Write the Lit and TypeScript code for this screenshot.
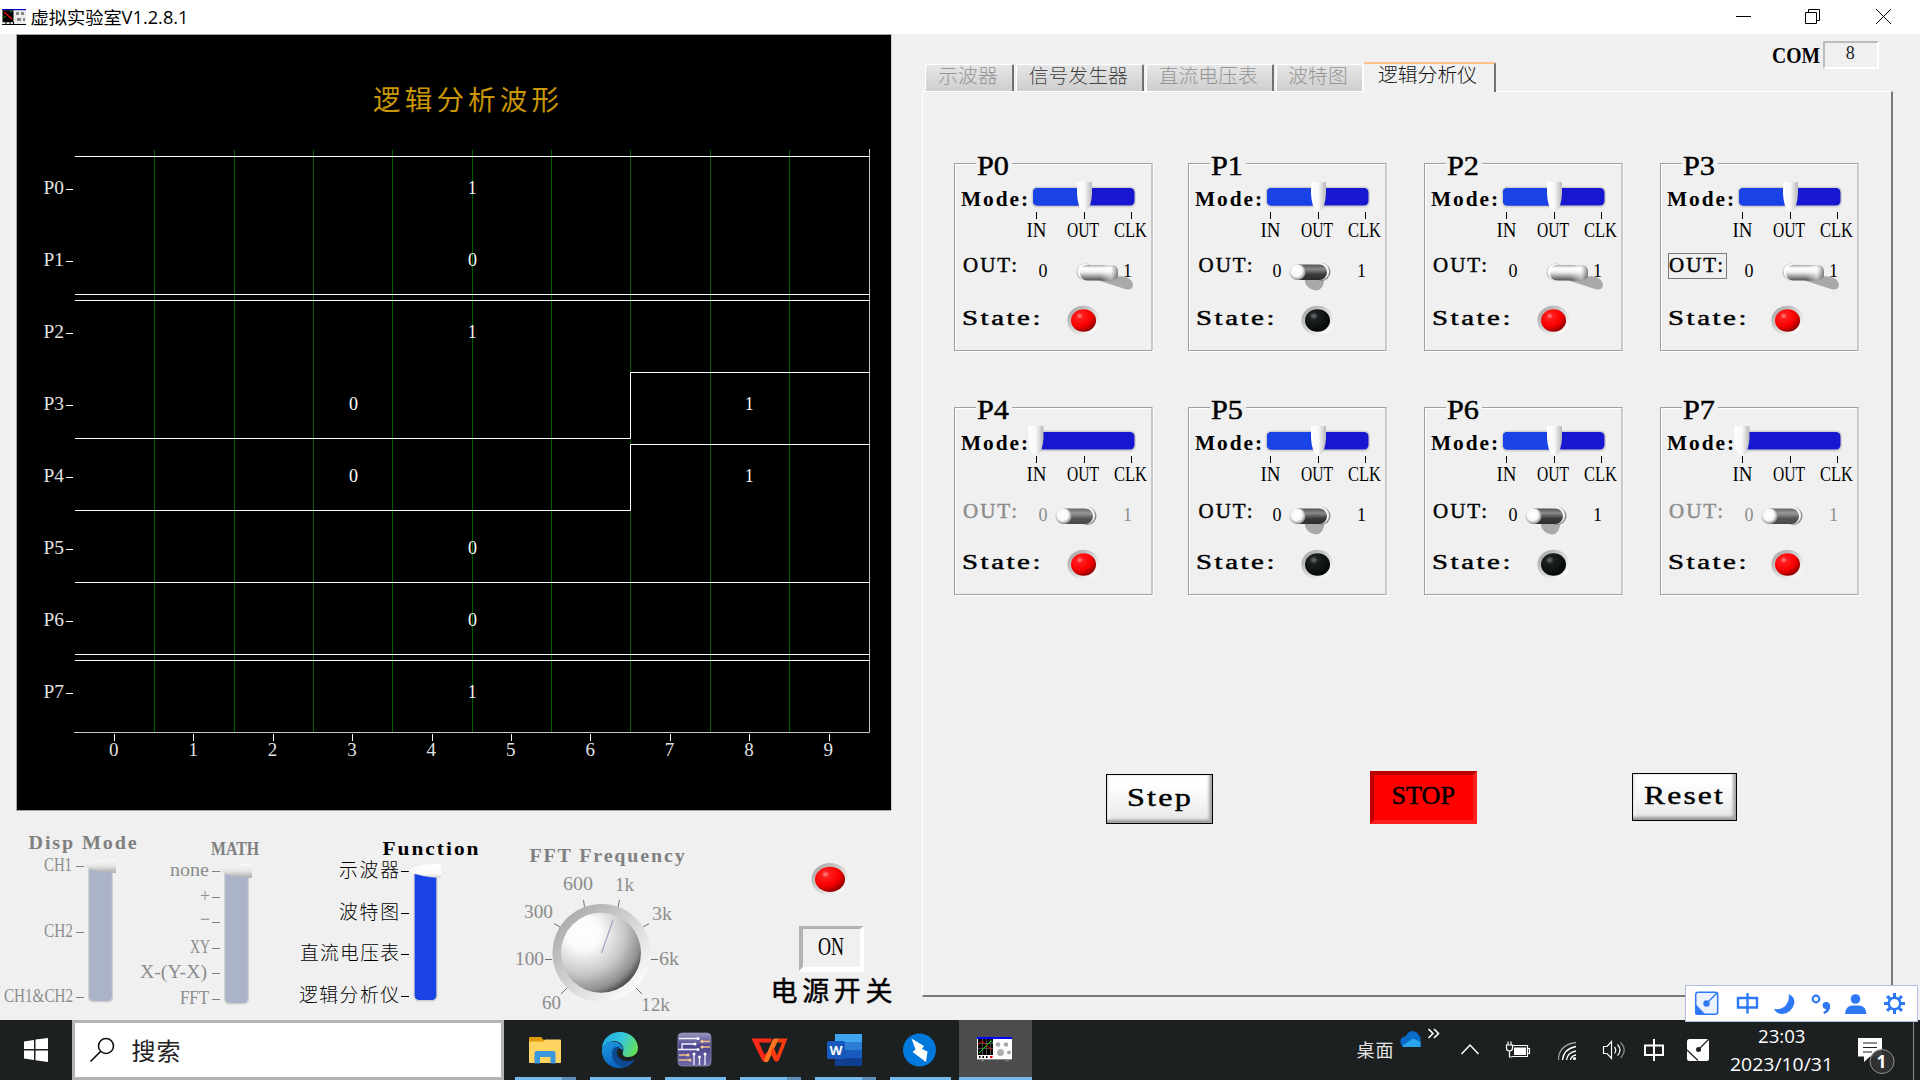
import { LitElement, html, svg, css } from "lit";
import { customElement, property } from "lit/decorators.js";

const label = (
  x: number, y: number, text: string, size: number, len: number,
  cls = "", adjust = "spacingAndGlyphs",
) => svg`<text class=${cls} x=${x} y=${y} font-size=${size} textLength=${len} lengthAdjust=${adjust}>${text}</text>`;

// Evenly spaced text whose glyphs keep their natural width.
const spaced = (x: number, y: number, text: string, size: number, len: number, cls = "") =>
  label(x, y, text, size, len, cls, "spacing");

// Wide text: glyphs and the gaps between them are stretched together.
const wide = (x: number, y: number, text: string, size: number, len: number, cls = "") =>
  label(x, y, text, size, len, "ls " + cls);

const defs = svg`<defs>
  <radialGradient id="red" cx=".35" cy=".3" r=".75">
    <stop offset="0" stop-color="#ff8a8a"/><stop offset=".18" stop-color="#ff1c1c"/>
    <stop offset=".6" stop-color="#fb0000"/><stop offset="1" stop-color="#8a0000"/>
  </radialGradient>
  <radialGradient id="black" cx=".35" cy=".3" r=".7">
    <stop offset="0" stop-color="#70787a"/><stop offset=".25" stop-color="#1b2020"/>
    <stop offset="1" stop-color="#050808"/>
  </radialGradient>
  <linearGradient id="ring" x1=".1" y1=".1" x2=".9" y2=".9">
    <stop offset="0" stop-color="#a8a8a8"/><stop offset=".6" stop-color="#dedede"/><stop offset="1" stop-color="#fff"/>
  </linearGradient>
  <linearGradient id="thumb" x1="0" y1="0" x2="1" y2="0">
    <stop offset="0" stop-color="#fff"/><stop offset=".5" stop-color="#f8f8f8"/><stop offset="1" stop-color="#b8b8b8"/>
  </linearGradient>
  <linearGradient id="thumbV" x1="0" y1="0" x2="0" y2="1">
    <stop offset="0" stop-color="#f8f8f8"/><stop offset=".5" stop-color="#e6e6e6"/><stop offset="1" stop-color="#ababab"/>
  </linearGradient>
  <linearGradient id="thumbW" x1="0" y1="0" x2="0" y2="1">
    <stop offset="0" stop-color="#fff"/><stop offset=".7" stop-color="#fafafa"/><stop offset="1" stop-color="#d0d0d0"/>
  </linearGradient>
  <linearGradient id="lever" x1="0" y1="0" x2="0" y2="1">
    <stop offset="0" stop-color="#a8a8a8"/><stop offset=".2" stop-color="#fff"/>
    <stop offset=".45" stop-color="#f2f2f2"/><stop offset="1" stop-color="#505050"/>
  </linearGradient>
  <linearGradient id="leverDark" x1="0" y1="0" x2="0" y2="1">
    <stop offset="0" stop-color="#555"/><stop offset=".3" stop-color="#8a8a8a"/><stop offset=".65" stop-color="#3a3a3a"/>
    <stop offset="1" stop-color="#2c2c2c"/>
  </linearGradient>
  <linearGradient id="leverDim" x1="0" y1="0" x2="0" y2="1">
    <stop offset="0" stop-color="#666"/><stop offset=".3" stop-color="#999"/><stop offset=".65" stop-color="#565656"/>
    <stop offset="1" stop-color="#484848"/>
  </linearGradient>
  <radialGradient id="ball" cx=".45" cy=".42" r=".58">
    <stop offset="0" stop-color="#fff"/><stop offset=".6" stop-color="#f8f8f8"/><stop offset="1" stop-color="#858585"/>
  </radialGradient>
  <linearGradient id="tip" x1="0" y1="0" x2="1" y2="0">
    <stop offset="0" stop-color="#fff" stop-opacity="0"/><stop offset=".6" stop-color="#fff" stop-opacity=".5"/>
    <stop offset="1" stop-color="#555" stop-opacity=".75"/>
  </linearGradient>
  <radialGradient id="knob" cx=".28" cy=".25" r=".85">
    <stop offset="0" stop-color="#fff"/><stop offset=".25" stop-color="#fafafa"/><stop offset=".6" stop-color="#c9c9c9"/>
    <stop offset=".85" stop-color="#909090"/><stop offset="1" stop-color="#3a3a3a"/>
  </radialGradient>
</defs>`;

const led = (x: number, y: number, rx: number, ry: number, on: boolean) => svg`
  <ellipse cx=${x} cy=${y} rx=${rx + 3.6} ry=${ry + 3.6} fill="url(#ring)"/>
  <ellipse cx=${x} cy=${y} rx=${rx} ry=${ry} fill=${on ? "url(#red)" : "url(#black)"}/>`;

const textCss = css`
  svg { display: block; overflow: visible; flex: none; }
  text { font-family: "Liberation Serif", "Noto Sans CJK SC", serif; fill: #000; white-space: pre; font-weight: 400; }
  .cn { font-weight: 300; }
  .b { font-weight: 700; }
  .ls { letter-spacing: 1.8px; }
  .m { stroke: #000; stroke-width: .45; }
  .g { fill: #8c8c8c; }
  .gb { fill: #808080; font-weight: 700; }
  .gm { fill: #8c8c8c; stroke: #8c8c8c; stroke-width: .45; }
  .w { fill: #fff; }
  .ax { fill: #e2e2e2; }
  .sans { font-family: "Open Sans", "Noto Sans CJK SC", sans-serif; }
`;

@customElement("channel-box")
class ChannelBox extends LitElement {
  @property() name = "";
  @property() mode: "IN" | "OUT" = "OUT";
  @property({ type: Boolean }) out = false;
  @property({ type: Boolean }) high = false;
  @property({ type: Boolean }) focused = false;
  @property({ type: Number }) outX = 9.5;
  @property({ type: Number }) outY = 109;
  @property({ type: Number }) ledX = 129.5;

  static styles = [textCss, css`:host { display: block; width: 200px; height: 190px; }`];

  private lever() {
    if (this.out) {
      return svg`
        <path d="M139 112 L170 113.5 Q179 116 179 122 Q178 128 171 126 L146 118Z" fill="#a9a9a9"/>
        <circle cx="131.5" cy="109.5" r="9" fill="url(#ring)"/>
        <circle cx="131" cy="108.5" r="7.5" fill="#fff"/>
        <rect x="126" y="102" width="38" height="15.5" rx="7" fill="url(#lever)"/>
        <rect x="146" y="102" width="18" height="15.5" rx="6" fill="url(#tip)"/>`;
    }
    const dim = this.mode === "IN";
    return svg`
      ${dim ? "" : svg`<path d="M117 114 H136 V119 Q134 127.500 128 127.500 Q119 126 117 119Z" fill="#a9a9a9"/>`}
      <circle cx="133.500" cy="109" r="9" fill="#8a8a8a"/>
      <circle cx="132.500" cy="108.300" r="8.600" fill="#f6f6f6"/>
      <rect x="104" y="101.500" width="35" height="15.500" rx="7.500" fill=${dim ? "url(#leverDim)" : "url(#leverDark)"}/>
      <circle cx="109.500" cy="109.200" r="8" fill="url(#ball)"/>`;
  }

  render() {
    const active = this.mode === "OUT";
    const tx = active ? 130.5 : 82;
    return html`<svg width="200" height="190" viewBox="0 0 200 190">
      ${defs}
      <rect x="1.5" y="1.5" width="197.500" height="187" fill="none" stroke="#fff"/>
      <rect x=".5" y=".5" width="197.500" height="187" fill="none" stroke="#a0a0a0"/>
      <rect x="22" y="-1" width="36" height="4" fill="#f0f0f0"/>
      ${label(23, 12, this.name, 27, 32, "m")}
      ${wide(7, 43, "Mode:", 20, 69, "b")}
      <rect x="77.500" y="23.500" width="104.500" height="21" rx="5.500" fill="#d2d2d2"/>
      <rect x="79" y="25" width="101.500" height="17.500" rx="4.500" fill="#1717d0"/>
      ${active ? svg`<path d="M130 25 H83.500 Q79 25 79 29.500 V38 Q79 42.500 83.500 42.500 H130Z" fill="#1943e4"/>` : ""}
      <path d="M${tx - 7.5} 19 H${tx + 7.5} V31 Q${tx + 6.5} 45 ${tx + 2} 48 H${tx - 2} Q${tx - 6.5} 45 ${tx - 7.5} 31Z" fill="url(#thumb)"/>
      <path d="M82.500 49 v7 M130.500 49 v7 M177.500 49 v7" stroke="#000"/>
      ${label(72.5, 74, "IN", 21, 20)}
      ${label(113, 74, "OUT", 21, 32)}
      ${label(160, 74, "CLK", 21, 33)}
      ${label(this.outX - 0.5, this.outY, "OUT:", 21, 54, active ? "m" : "gm", "spacing")}
      ${this.focused ? svg`<rect x="8.500" y="90.500" width="58" height="25" fill="none" stroke="#000" stroke-dasharray="1 1"/>` : ""}
      ${label(84.5, 113.5, "0", 18, 9, active ? "" : "g")}
      ${this.lever()}
      ${label(169, 113.5, "1", 18, 9, active ? "" : "g")}
      ${wide(8, 161.5, "State:", 20.5, 81, "m")}
      ${led(this.ledX, 157.5, 12.5, 11.2, this.high)}
    </svg>`;
  }
}

const channels = [
  { name: "P0", mode: "OUT", out: true, high: true, x: 9.5, y: 109, led: 129.5 },
  { name: "P1", mode: "OUT", out: false, high: false, x: 11, y: 109, led: 129.5 },
  { name: "P2", mode: "OUT", out: true, high: true, x: 9.5, y: 109, led: 129.5 },
  { name: "P3", mode: "OUT", out: true, high: true, x: 9.5, y: 109, led: 127.5, focused: true },
  { name: "P4", mode: "IN", out: false, high: true, x: 9.5, y: 111, led: 129.5 },
  { name: "P5", mode: "OUT", out: false, high: false, x: 11, y: 111, led: 129.5 },
  { name: "P6", mode: "OUT", out: false, high: false, x: 9.5, y: 111, led: 129.5 },
  { name: "P7", mode: "IN", out: false, high: true, x: 9.5, y: 111, led: 127.5 },
];

const tabs = [
  { text: "示波器", cls: "off", w: 89 },
  { text: "信号发生器", cls: "", w: 128.5 },
  { text: "直流电压表", cls: "off", w: 128.5 },
  { text: "波特图", cls: "off", w: 87 },
  { text: "逻辑分析仪", cls: "on", w: 133 },
];

@customElement("app-root")
class AppRoot extends LitElement {
  static styles = [textCss, css`
    :host { display: block; width: 1920px; height: 1080px; overflow: hidden; position: relative; background: #f0f0f0; }
    .window { display: flex; flex-direction: column; height: 1080px; }
    .titlebar { display: flex; height: 34px; background: #fff; justify-content: space-between; flex: none; }
    .main { display: flex; height: 986px; flex: none; }
    .left { width: 905px; flex: none; display: flex; flex-direction: column; }
    .chart { margin-left: 16px; }
    .controls { display: flex; height: 209px; }
    .right { margin-left: 17px; width: 971px; display: flex; flex-direction: column; }
    .head { display: flex; height: 57px; justify-content: space-between; flex: none; }
    .tabs { display: flex; align-items: flex-end; gap: 1.5px; padding-left: 3px; }
    .tab { box-sizing: border-box; height: 27px; border-left: 1px solid #fff; border-top: 1px solid #fff; border-right: 2px solid #707070;
      border-radius: 2px 2px 0 0; background: linear-gradient(#e6e6e6, #cecece); color: #444; padding-right: 2px;
      font: 300 19.8px/20px "Noto Sans CJK SC", sans-serif; text-align: center; white-space: nowrap; }
    .tab.off { color: #959595; }
    .tab:nth-child(4) { border-right-color: #fff; border-right-width: 1px; }
    .tab.on { height: 30px; margin: 0 0 -1px -1.5px; background: #f0f0f0; border-top: 2px solid #ffc08a; color: #111; line-height: 20px; z-index: 1; }
    .com { display: flex; padding: 7px 14px 0 0; gap: 3px; }
    .com-box { box-sizing: border-box; width: 56px; height: 28px; border: 2px solid; border-color: #bcbcbc #fff #fff #bcbcbc;
      text-align: center; font: 18px/20px "Liberation Serif", serif; color: #222; padding-right: 1.5px; }
    .panel { box-sizing: border-box; height: 906px; border: solid; border-width: 1px 2px 2px 1px; border-color: #fff #787878 #787878 #fff;
      padding: 71px 0 0 31px; }
    .grid { display: grid; grid-template-columns: 234px 236px 236px 200px; grid-template-rows: 244px 189px; }
    .buttons { display: flex; padding: 175px 0 0 152px; align-items: flex-start; }
    .btn { box-sizing: border-box; text-align: center; }
    .raised { border: 1.500px solid #000; background: linear-gradient(#fff 20%, #f2f2f2 65%, #e4e4e4);
      box-shadow: inset -4px 0 3px -1px #a6a6a6, inset 0 -4px 3px -1px #999, inset 3px 0 2px #f4f4f4; }
    .step { width: 107px; height: 50px; margin-top: 3px; }
    .stop { width: 107px; height: 53px; margin-left: 157px; background: #f00; border: 4px solid;
      border-color: #b80000 #ff2020 #ff2020 #c00000; }
    .reset { width: 105px; height: 48px; margin: 2px 0 0 155px; }
    .stop svg { margin: -4px; }
    .raised svg { margin: -1px; }
    .taskbar { display: flex; height: 60px; background: #1c2020; flex: none; }
    .search { box-sizing: border-box; width: 432px; height: 60px; border: 3px solid #b3b3b3; background: #fff; margin-right: 3px; }
    .tasks { display: flex; }
    .tray { margin-left: auto; display: flex; }
    .ime { position: absolute; left: 1685px; top: 984.5px; box-sizing: border-box; width: 233px; height: 37px; background: #fff;
      border: 1.500px solid #b3bfe2; }
  `];

  private chart() {
    const rows = [0, 1, 2, 3, 4, 5, 6, 7];
    const level = [1, 0, 1, -1, -1, 0, 0, 1];
    const hi = (i: number) => 156.5 + 72 * i;
    const lo = (i: number) => 222.5 + 72 * i;
    const at = (i: number) => 75 + 79.4 * i;
    return html`<svg class="chart" width="876" height="777" viewBox="16 34 876 777">
      <rect x="16" y="34" width="875.500" height="777" fill="#a8a8a8"/>
      <rect x="17" y="35" width="874" height="775" fill="#000"/>
      <text x="373" y="110" font-size="27.500" textLength="186" lengthAdjust="spacing" style="fill:#c99604">逻辑分析波形</text>
      ${[154, 234, 313, 392, 472, 551, 630, 710, 789].map((x) => svg`<path d="M${x + 0.5} 150V732" stroke="#006000"/>`)}
      <path d="M74 732.500H869.500V149" fill="none" stroke="#c8c8c8"/>
      ${rows.map((i) => svg`
        ${label(43.5, 194.3 + 72 * i, "P" + i, 19.5, 20.5, "ax")}
        <path d="M66 ${189.5 + 72 * i}h7" stroke="#fff"/>
        ${level[i] < 0
          ? svg`<path d="M75 ${lo(i)}H630.500V${hi(i)}H869" fill="none" stroke="#fff"/>
            ${label(349, 194 + 72 * i, "0", 19, 9, "w")}${label(745, 194 + 72 * i, "1", 19, 8.5, "w")}`
          : svg`<path d="M75 ${level[i] ? hi(i) : lo(i)}H869" stroke="#fff"/>
            ${label(468, 194 + 72 * i, String(level[i]), 19, level[i] ? 8.5 : 9, "w")}`}`)}
      ${[0, 1, 2, 3, 4, 5, 6, 7, 8, 9].map((i) => svg`
        <path d="M${Math.round(at(i) + 39) + 0.5} 734v7" stroke="#fff"/>
        ${label(at(i) + 34, 756, String(i), 19.5, 9.5, "ax")}`)}
    </svg>`;
  }

  private track(x: number, y: number, w: number, bottom: number, color: string) {
    return svg`<rect x=${x} y=${y} width=${w} height=${bottom - y + 1.5} rx="5" fill="#cfcfcf"/>
      <rect x=${x + 1.2} y=${y} width=${w - 2.4} height=${bottom - y} rx="4.500" fill=${color}/>`;
  }

  private pointer(x: number, y: number, fill: string) {
    return svg`<path d="M${x} ${y + 7} Q${x + 10} ${y + 0.5} ${x + 24} ${y} H${x + 33} V${y + 14} Q${x + 12} ${y + 13} ${x} ${y + 7}Z" fill=${fill}/>`;
  }

  private controls() {
    const ticks = (x: number, w: number, ys: number[], c: string) =>
      ys.map((y) => svg`<path d="M${x} ${y + 0.5}h${w}" stroke=${c}/>`);
    return html`<div class="controls">
      <svg width="139" height="209" viewBox="0 811 139 209">${defs}
        ${wide(28.5, 849, "Disp Mode", 19.5, 110, "gb")}
        ${label(44, 871, "CH1", 19, 28, "g")}${label(44, 937, "CH2", 19, 29, "g")}${label(4, 1002, "CH1&CH2", 19, 69, "g")}
        ${ticks(76, 8, [866, 932, 997], "#808080")}
        ${this.track(88, 866, 25, 1001, "#abb3c9")}
        ${this.pointer(83, 859, "url(#thumbV)")}
      </svg>
      <svg width="151" height="209" viewBox="139 811 151 209">
        ${label(211, 855, "MATH", 19.5, 48, "gb")}
        ${label(170, 876, "none", 19, 39, "g")}${label(200, 902, "+", 18, 10, "g")}${label(200, 925, "−", 18, 10, "g")}
        ${label(190, 953, "XY", 19, 20, "g")}${label(140, 978, "X-(Y-X)", 19, 67, "g")}${label(180, 1004, "FFT", 19, 29, "g")}
        ${ticks(212, 8, [871, 897, 922, 948, 973, 999], "#808080")}
        ${this.track(224, 870, 25, 1003, "#abb3c9")}
        ${this.pointer(219, 864, "url(#thumbV)")}
      </svg>
      <svg width="210" height="209" viewBox="290 811 210 209">
        ${wide(382.5, 855, "Function", 19.5, 98, "b")}
        ${spaced(339, 876.5, "示波器", 18.8, 60, "cn")}${spaced(339, 918.5, "波特图", 18.8, 60, "cn")}
        ${spaced(300, 959.5, "直流电压表", 18.8, 99, "cn")}${spaced(299, 1001.5, "逻辑分析仪", 18.8, 100, "cn")}
        ${ticks(401, 8, [871, 913, 954, 996], "#000")}
        ${this.track(413.5, 870, 24, 1000, "#1943e4")}
        ${this.pointer(408, 864, "url(#thumbW)")}
      </svg>
      <svg width="240" height="209" viewBox="500 811 240 209">
        ${wide(529.5, 862, "FFT Frequency", 19.5, 157, "gb")}
        ${label(563, 890, "600", 19, 30, "g")}${label(615, 891, "1k", 19, 19, "g")}${label(524, 918, "300", 19, 29, "g")}
        ${label(652, 920, "3k", 19, 20, "g")}${label(515, 965, "100", 19, 29, "g")}${label(659, 965, "6k", 19, 20, "g")}
        ${label(542, 1009, "60", 19, 19, "g")}${label(641, 1011, "12k", 19, 29, "g")}
        <path d="M583.500 900l1 7M619.500 900l-1.500 7M554 923.500l6 3.500M649 923.500l-6 3.500M545 959.500h7M651 959.500h7M561 994l6-6M642 994l-6-6" stroke="#707070"/>
        <circle cx="601.500" cy="953" r="49" fill="url(#ring)"/>
        <circle cx="601" cy="952.800" r="40" fill="url(#knob)"/>
        <path d="M601.500 953L613 920" stroke="#a3a3c9" stroke-width="1.200"/>
      </svg>
      <svg width="165" height="209" viewBox="740 811 165 209">
        ${led(830, 879.3, 15, 12.6, true)}
        <path d="M799 926h65l-4 3H803V967l-4 4.500Z" fill="#b2b2b2"/>
        <path d="M864 926v46h-66l5-5h57v-38Z" fill="#fff"/>
        ${label(818, 955, "ON", 26, 26)}
        <text class="m" x="770.500" y="1001" font-size="27" textLength="122" lengthAdjust="spacing" stroke-width=".8">电源开关</text>
      </svg>
    </div>`;
  }

  private task(content: unknown, w = 61, extra = 0) {
    return html`<svg width="75" height="60" viewBox="0 0 75 60">
      ${content}
      <path d="M8 58.500h${w}" stroke="#76b9ed" stroke-width="3"/>
      ${extra ? svg`<path d="M${8 + w} 58.500h${extra}" stroke="#5e8fb6" stroke-width="3"/>` : ""}
    </svg>`;
  }

  private taskbar() {
    return html`<div class="taskbar">
      <svg width="72" height="60" viewBox="0 1020 72 60">
        <path d="M24 1041.500L34 1040V1049H24ZM35.500 1039.500L48 1038V1049H35.500ZM24 1050.500H34V1060L24 1058.500ZM35.500 1050.500H48V1062L35.500 1060.200Z" fill="#fff"/>
      </svg>
      <div class="search"><svg width="426" height="54" viewBox="75 1023 426 54">
        <circle cx="106" cy="1046" r="7.500" fill="none" stroke="#111" stroke-width="1.600"/>
        <path d="M100.500 1051.500L90.500 1061.500" stroke="#111" stroke-width="1.700"/>
        <text class="sans" x="131.500" y="1060" font-size="24" textLength="49" style="fill:#222">搜索</text>
      </svg></div>
      <div class="tasks">
        ${this.task(svg`
          <path d="M22 18q0-1 1-1h11l3 3h17v3H22z" fill="#e09a08"/>
          <path d="M22 21.500h14l2-2h15q1 0 1 1V42q0 1-1 1H23q-1 0-1-1z" fill="#ffd460"/>
          <path d="M27.500 43.500V33q0-2 2-2H46.500q2 0 2 2V43.500H43.500V37H33V43.500z" fill="#3a97e0"/>`, 47, 14)}
        ${this.task(svg`
          <defs>
            <linearGradient id="e1" x1="0" y1=".3" x2="1" y2=".6"><stop offset="0" stop-color="#22a9e0"/><stop offset=".5" stop-color="#35c6dd"/><stop offset="1" stop-color="#66e055"/></linearGradient>
            <linearGradient id="e2" x1="0" y1="0" x2=".5" y2="1"><stop offset="0" stop-color="#1d9bde"/><stop offset="1" stop-color="#0a62c0"/></linearGradient>
          </defs>
          <path d="M20 29C20 18 29 12 38 12C49 12 56 20 56 28C56 34 51 37 46 37C42 37 40 35 41 32C43 27 39 22 33 21C27 21 22 24 20 29Z" fill="url(#e1)"/>
          <path d="M20 29C22 23 28 20 34 22C39 23 42 28 41 31C38 26 33 28 33 34C34 41 43 45 52 40C48 46 43 48 38 48C27 48 19 40 20 29Z" fill="url(#e2)"/>
          <path d="M30 33C29 41 36 47.500 43 47C48 45.500 51 42.500 53 39.500C46 43 37 41 35 34C34 30 36 28 38 27C33 26 30 29 30 33Z" fill="#0c4a94"/>`)}
        ${this.task(svg`
          <defs><linearGradient id="pcb" x1="0" y1="0" x2="0" y2="1"><stop offset="0" stop-color="#9a98bf"/><stop offset=".4" stop-color="#4b4590"/><stop offset="1" stop-color="#6c68a4"/></linearGradient></defs>
          <rect x="21" y="13" width="33" height="33" rx="4" fill="url(#pcb)" stroke="#8c8ab0" stroke-width=".8"/>
          <path d="M22 18.500H41M25 29V24H38M21 29.500H41M37 45V35M42.500 45V38M48 45V35" stroke="#f4f2ff" stroke-width="1.300" fill="none"/>
          <path d="M45 21.500H53M45 27H53M22 35H31M22 40H33" stroke="#f3bf82" stroke-width="1.400"/>
          ${[[41, 18.5], [38, 24], [41, 29.5], [37, 34], [42.5, 37], [48, 34]].map(([x, y]) => svg`<circle cx=${x} cy=${y} r="1.500" fill="#fff"/>`)}
          ${[[45, 21.5], [45, 27], [31, 35], [33, 40]].map(([x, y]) => svg`<circle cx=${x} cy=${y} r="1.500" fill="#f8c98e"/>`)}`)}
        ${this.task(svg`
          <path d="M19.500 18.500H40L38.500 22.500H27L32.500 35L34 32L37 37L34.500 41Q32.500 43.500 30 40Z" fill="#fb2a16"/>
          <path d="M33 38L40.500 20Q41 18.500 42.500 18.500H47L36.500 41Q34.500 43.500 32 41Z" fill="#ff7420"/>
          <path d="M41.500 27L45 35.500L50 22.500H45.500L47 18.500H55.500L47 40Q44.500 43.500 42 40L38.500 33Z" fill="#fc3a10"/>`, 47, 14)}
        ${this.task(svg`
          <rect x="28" y="14" width="27" height="8" fill="#41a5ee"/><rect x="28" y="22" width="27" height="8" fill="#2b7cd3"/>
          <rect x="28" y="30" width="27" height="8" fill="#185abd"/><rect x="28" y="38" width="27" height="8" fill="#103f91"/>
          <rect x="20" y="21" width="18" height="18" rx="1.500" fill="#1857bb"/>
          <text x="22.500" y="34.500" font-size="12.500" textLength="13" lengthAdjust="spacingAndGlyphs" class="sans b w">W</text>`, 47, 14)}
        ${this.task(svg`
          <circle cx="37.500" cy="30" r="16.500" fill="#0078dc"/>
          <path d="M29.500 18.500L42 26L40 29L45.500 31.500L44 42L30.500 32L33.500 29.500Z" fill="#fff"/>`)}
        <svg width="76" height="60" viewBox="957 1020 76 60">
          <rect x="959" y="1020" width="73" height="60" fill="#4a4c4e"/>
          ${this.labIcon()}
          <path d="M959 1078.500h73" stroke="#76b9ed" stroke-width="3"/>
        </svg>
      </div>
      <div class="tray">
        <svg width="72" height="60" viewBox="1350 1020 72 60">
          <text class="sans" x="1356.500" y="1056.500" font-size="18" textLength="37" style="fill:#e4e4e4">桌面</text>
          <path d="M1403 1047Q1399 1043 1401 1039Q1403 1036 1406 1036Q1408 1031 1413 1031Q1418 1032 1419 1036L1420.500 1036.500V1047Z" fill="#0a6cc8"/>
          <path d="M1402 1046L1413 1038.500L1420.500 1042V1047H1403.500Z" fill="#2aa4ec"/>
        </svg>
        <svg width="24" height="60" viewBox="1422 1020 24 60">
          <path d="M1428.500 1029l4.500 4.500l-4.500 4.500M1434 1029l4.500 4.500l-4.500 4.500" fill="none" stroke="#fff" stroke-width="1.600"/>
        </svg>
        <svg width="48" height="60" viewBox="1446 1020 48 60"><path d="M1461.500 1054l8.500-9l8.500 9" fill="none" stroke="#fff" stroke-width="1.500"/></svg>
        <svg width="50" height="60" viewBox="1494 1020 50 60">
          <path d="M1512 1045.500H1527.500V1056.500H1510V1053M1528 1048.500h1.500v5h-1.500" fill="none" stroke="#fff" stroke-width="1.200"/>
          <rect x="1514" y="1047.500" width="12" height="7.500" fill="#fff"/>
          <path d="M1506.500 1045h6v3q0 3-3 3t-3-3zM1508 1045v-3.500M1511 1045v-3.500M1509.500 1051v6h3" fill="#1c2020" stroke="#fff" stroke-width="1.200"/>
        </svg>
        <svg width="48" height="60" viewBox="1544 1020 48 60" fill="none" stroke-width="1.300">
          <path d="M1558.500 1060q0-15 17.500-17.500" stroke="#9a9a9a"/><path d="M1562.500 1060q1-11 13.500-13.500M1566.500 1060q1-7.500 9.500-9M1570.500 1060q.5-4 5.500-5" stroke="#fff"/>
          <circle cx="1574.500" cy="1058.500" r="1.600" fill="#fff"/>
        </svg>
        <svg width="42" height="60" viewBox="1592 1020 42 60" fill="none" stroke="#fff" stroke-width="1.200">
          <path d="M1603.500 1046.500h3.500l4.500-5v17l-4.500-5h-3.500z"/>
          <path d="M1614.500 1047q2.500 3 0 6.500M1617.500 1044.500q5 5.500 0 11"/><path d="M1620.500 1042.500q7.500 7.500 0 15.500" stroke="#888"/>
        </svg>
        <svg width="42" height="60" viewBox="1634 1020 42 60">
          <path d="M1645 1045.500h18v9.500h-18zM1654 1039v22" fill="none" stroke="#fff" stroke-width="2"/>
        </svg>
        <svg width="44" height="60" viewBox="1676 1020 44 60">
          <rect x="1687" y="1039" width="22" height="22" rx="2.500" fill="#fff"/>
          <circle cx="1698.500" cy="1049.500" r="2.500" fill="#1c2020"/><path d="M1698.500 1049.500L1708.500 1039.500M1687 1050L1698 1060.500" stroke="#1c2020" stroke-width="1.200"/>
        </svg>
        <svg width="126" height="60" viewBox="1720 1020 126 60">
          ${label(1758, 1042.7, "23:03", 18.5, 47.5, "sans w")}
          ${label(1730, 1070.7, "2023/10/31", 18.5, 103, "sans w")}
        </svg>
        <svg width="74" height="60" viewBox="1846 1020 74 60">
          <path d="M1858 1038h24v18.500h-12l-6 5.500v-5.500h-6z" fill="#fff"/>
          <path d="M1863 1043h14M1863 1047.500h14M1863 1052h9" stroke="#1c2020" stroke-width="1.200"/>
          <circle cx="1882" cy="1061.500" r="12" fill="#303232" fill-opacity=".93" stroke="#909090"/>
          ${label(1876.5, 1067.5, "1", 17.5, 10, "sans w b")}
          <path d="M1913.500 1021v59" stroke="#8a8c8c"/>
        </svg>
      </div>
    </div>`;
  }

  private labIcon() {
    return svg`
      <rect x="977" y="1037" width="35" height="22" fill="#fff"/><rect x="977" y="1037" width="35" height="2" fill="#00f"/>
      <rect x="978" y="1039" width="15" height="16" fill="#000"/>
      <path d="M982.500 1039v16M986.500 1039v16M990.500 1039v16M978 1043.500h15M978 1048.500h15" stroke="#777" stroke-width=".6"/>
      <path d="M978 1045l3-3.500l3 1l8 8" fill="none" stroke="#e00" /><path d="M979 1053l12-12l2 2" fill="none" stroke="#0c0"/>
      <circle cx="998" cy="1044.500" r="2.300" fill="#aaa"/><circle cx="1006" cy="1044.500" r="2.300" fill="#aaa"/>
      <circle cx="1000.500" cy="1052.500" r="3.500" fill="#b0b0b0"/><circle cx="1009" cy="1052.500" r="2" fill="#aaa"/>
      <path d="M979 1057h1.500M982.500 1057h1.500M986 1057h1.500" stroke="#000" stroke-width="2"/><path d="M990 1057h2.500" stroke="#e00" stroke-width="2"/>
      <path d="M977 1059.500h35M981 1060.800h3M1005 1060.800h4" stroke="#888"/>`;
  }

  private ime() {
    const c = "#2f78f5";
    return html`<div class="ime"><svg width="230" height="34" viewBox="1686 985.500 230 34">
      <rect x="1695.700" y="991.700" width="22" height="22" rx="2.500" fill="#eaf1ff" stroke=${c} stroke-width="1.500"/>
      <path d="M1695 1003v9q0 2.500 2.500 2.500h8.500z" fill=${c}/><circle cx="1706.500" cy="1003" r="3.200" fill=${c}/>
      <path d="M1706.500 1003L1717 992.500" stroke=${c} stroke-width="1.500"/>
      <path d="M1738 997.500h19v9.500h-19zM1747.500 992.500v20.500" fill="none" stroke=${c} stroke-width="2.400"/>
      <path d="M1788.500 993.500Q1796 997 1794 1004Q1791 1013 1782 1013.500Q1776 1013 1774 1008.500Q1782 1009.500 1786 1004.500Q1790 999.500 1788.500 993.500Z" fill=${c}/>
      <circle cx="1816" cy="998.500" r="3.300" fill="none" stroke=${c} stroke-width="2.200"/>
      <path d="M1826 1001.500a4 4 0 0 1 4.200 4q0 6-6 8l-1-1.800q3-1.300 3-3.200a3.500 3.500 0 0 1-.2-7z" fill=${c}/>
      <circle cx="1855.500" cy="998.500" r="4.800" fill=${c}/><path d="M1845 1013.500q.5-8 7-8.500h7.500q6.500 .5 7 8.500z" fill=${c}/>
      <circle cx="1894.500" cy="1003" r="5.800" fill="none" stroke=${c} stroke-width="2.600"/>
      ${[0, 45, 90, 135, 180, 225, 270, 315].map((a) => svg`<path d="M1894.500 996.500v-4" stroke=${c} stroke-width="3" transform="rotate(${a} 1894.500 1003)"/>`)}
    </svg></div>`;
  }

  render() {
    return html`
      <div class="window">
        <div class="titlebar">
          <svg width="220" height="34" viewBox="0 0 220 34">
            <rect x="2" y="9" width="24" height="16" fill="#eee"/><rect x="2" y="9" width="24" height="1.200" fill="#00c"/>
            <rect x="2.500" y="10.200" width="11" height="12" fill="#000"/>
            <path d="M4 12l8 7" stroke="#f00" stroke-width="1.200"/><path d="M3.500 18l2-2M10 12l2-1" stroke="#0d0"/>
            <path d="M16 13.500h3M21 13.500h3M17 19.500h4M23 19.500h2" stroke="#888" stroke-width="3"/>
            <path d="M2 24.500h24M6 22v2M10 22v2M13.500 22v2" stroke="#000"/>
            ${label(30.5, 23.5, "虚拟实验室V1.2.8.1", 17.5, 158, "sans")}
          </svg>
          <svg width="200" height="34" viewBox="1720 0 200 34" fill="none" stroke="#000">
            <path d="M1736 16.500h15M1876 9l15 15M1891 9l-15 15"/>
            <path d="M1805.500 12.500h11v11h-11zM1808.500 12.500v-3h11v11h-3"/>
          </svg>
        </div>
        <div class="main">
          <div class="left">${this.chart()}${this.controls()}</div>
          <div class="right">
            <div class="head">
              <div class="tabs">${tabs.map((t) => html`<div class="tab ${t.cls}" style="width:${t.w}px">${t.text}</div>`)}</div>
              <div class="com">
                <svg width="48" height="28" viewBox="1772 41 48 28">${label(1772, 62.5, "COM", 24, 48, "b")}</svg>
                <div class="com-box">8</div>
              </div>
            </div>
            <div class="panel">
              <div class="grid">${channels.map((c) => html`<channel-box .name=${c.name} .mode=${c.mode as "IN" | "OUT"}
                .out=${c.out} .high=${c.high} .focused=${!!c.focused} .outX=${c.x} .outY=${c.y} .ledX=${c.led}></channel-box>`)}</div>
              <div class="buttons">
                <div class="btn raised step"><svg width="107" height="50" viewBox="1106 774 107 50">${wide(1127, 805.5, "Step", 26, 66, "m")}</svg></div>
                <div class="btn stop"><svg width="107" height="53" viewBox="1370 771 107 53">${label(1391.5, 804, "STOP", 26, 63.5, "m")}</svg></div>
                <div class="btn raised reset"><svg width="105" height="48" viewBox="1632 773 105 48">${wide(1644, 804, "Reset", 26, 81, "m")}</svg></div>
              </div>
            </div>
          </div>
        </div>
        ${this.taskbar()}
      </div>
      ${this.ime()}`;
  }
}
